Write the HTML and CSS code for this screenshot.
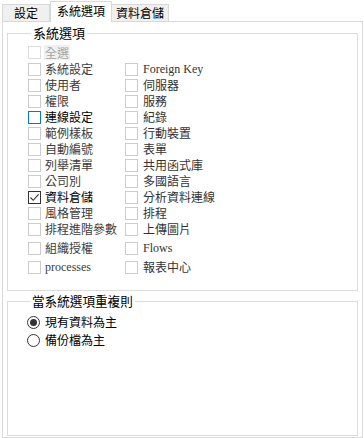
FILE: index.html
```html
<!DOCTYPE html>
<html lang="zh-Hant">
<head>
<meta charset="utf-8">
<title>系統選項</title>
<link rel="stylesheet" href="styles.css">
</head>
<body>
<div class="tabs">
  <div class="tab tab-1">設定</div>
  <div class="tab tab-active">系統選項</div>
  <div class="tab tab-3">資料倉儲</div>
</div>
<div class="panel">
  <fieldset class="group group-options">
    <legend class="legend">系統選項</legend>
    <div class="row row-all">
      <span class="cb cb-disabled"></span><span class="lbl lbl-disabled">全選</span>
    </div>
    <div class="grid">
      <div class="row first"><span class="cb"></span><span class="lbl">系統設定</span></div>
      <div class="row first"><span class="cb"></span><span class="lbl lbl-c2 latin">Foreign Key</span></div>
      <div class="row"><span class="cb"></span><span class="lbl">使用者</span></div>
      <div class="row"><span class="cb"></span><span class="lbl lbl-c2">伺服器</span></div>
      <div class="row"><span class="cb"></span><span class="lbl">權限</span></div>
      <div class="row"><span class="cb"></span><span class="lbl lbl-c2">服務</span></div>
      <div class="row"><span class="cb cb-focus"></span><span class="lbl lbl-strong">連線設定</span></div>
      <div class="row"><span class="cb"></span><span class="lbl lbl-c2">紀錄</span></div>
      <div class="row"><span class="cb"></span><span class="lbl">範例樣板</span></div>
      <div class="row"><span class="cb"></span><span class="lbl lbl-c2">行動裝置</span></div>
      <div class="row"><span class="cb"></span><span class="lbl">自動編號</span></div>
      <div class="row"><span class="cb"></span><span class="lbl lbl-c2">表單</span></div>
      <div class="row"><span class="cb"></span><span class="lbl">列舉清單</span></div>
      <div class="row"><span class="cb"></span><span class="lbl lbl-c2">共用函式庫</span></div>
      <div class="row"><span class="cb"></span><span class="lbl">公司別</span></div>
      <div class="row"><span class="cb"></span><span class="lbl lbl-c2">多國語言</span></div>
      <div class="row"><span class="cb cb-checked"><svg class="check" viewBox="0 0 11 11" width="11" height="11"><path d="M1.5 5.5 L4.2 8.3 L9.6 2.4" fill="none" stroke="#333" stroke-width="1.1"/></svg></span><span class="lbl lbl-strong">資料倉儲</span></div>
      <div class="row"><span class="cb"></span><span class="lbl lbl-c2">分析資料連線</span></div>
      <div class="row"><span class="cb"></span><span class="lbl">風格管理</span></div>
      <div class="row"><span class="cb"></span><span class="lbl lbl-c2">排程</span></div>
      <div class="row"><span class="cb"></span><span class="lbl">排程進階參數</span></div>
      <div class="row"><span class="cb"></span><span class="lbl lbl-c2">上傳圖片</span></div>
      <div class="row spaced"><span class="cb"></span><span class="lbl">組織授權</span></div>
      <div class="row spaced"><span class="cb"></span><span class="lbl lbl-c2 latin">Flows</span></div>
      <div class="row spaced"><span class="cb"></span><span class="lbl latin">processes</span></div>
      <div class="row spaced"><span class="cb"></span><span class="lbl lbl-c2">報表中心</span></div>
    </div>
  </fieldset>
  <fieldset class="group group-dup">
    <legend class="legend legend-dup">當系統選項重複則</legend>
    <div class="radio-row"><span class="radio radio-on"></span><span class="lbl lbl-strong">現有資料為主</span></div>
    <div class="radio-row"><span class="radio"></span><span class="lbl lbl-strong">備份檔為主</span></div>
  </fieldset>
</div>
</body>
</html>
```
FILE: styles.css
```css
* { box-sizing: border-box; }
html, body { margin: 0; padding: 0; background: #ffffff; }
body {
  width: 364px;
  height: 438px;
  overflow: hidden;
  font-family: "Noto Sans CJK TC", "Noto Sans", sans-serif;
  font-size: 12px;
  color: #000;
}

.tabs {
  display: flex;
  align-items: flex-end;
  height: 21px;
  padding-left: 2px;
}
.tab {
  height: 17px;
  border: 1px solid #d9d9d9;
  border-bottom: none;
  background: #f0f0f0;
  font-size: 12px;
  line-height: 15px;
  text-align: center;
}
.tab-1 { width: 48px; }
.tab-active {
  width: 62px;
  height: 21px;
  margin-bottom: -1px;
  background: #ffffff;
  line-height: 18px;
  position: relative;
  z-index: 1;
}
.tab-3 { width: 57px; border-left: none; }

.panel {
  margin-left: 2px;
  width: 361px;
  height: 417px;
  border: 1px solid #d9d9d9;
  background: #ffffff;
  display: flex;
  flex-direction: column;
}

.group {
  margin: 4px 4px 0 4px;
  width: 351px;
  border: 1px solid #dcdcdc;
  padding: 4px 0 0 20px;
  min-width: 0;
}
.group-options { padding-bottom: 15px; }
.group-dup {
  margin-top: 3px;
  margin-bottom: 1px;
  flex: 1;
  padding-left: 19px;
  padding-top: 5px;
}

.legend {
  margin-left: 3px;
  padding: 0 2px;
  font-size: 13px;
  line-height: 14px;
  color: #000;
}
.legend-dup { font-size: 12.6px; }

.grid {
  display: grid;
  grid-template-columns: 97px 1fr;
  margin-top: 1px;
}

.row {
  display: flex;
  align-items: center;
  height: 16px;
}
.row.spaced { margin-top: 3px; }

.cb {
  flex: none;
  width: 13px;
  height: 13px;
  border: 1px solid #cccccc;
  background: #ffffff;
  display: flex;
  align-items: center;
  justify-content: center;
}
.cb-disabled { border-color: #dddddd; }
.cb-focus { border-color: #0078d7; }
.cb-checked { border-color: #333333; }
.check { display: block; }

.lbl {
  margin-left: 4px;
  line-height: 14px;
  color: #3c3c3c;
  white-space: nowrap;
}
.lbl-c2 { margin-left: 5px; color: #333333; }
.lbl-strong { color: #000000; }
.lbl-disabled {
  color: #a6a6a6;
  background: #f0f0f0;
  padding: 0 1px;
  margin-left: 3px;
  line-height: 15px;
}
.latin { font-family: "Liberation Serif", "DejaVu Serif", serif; font-size: 12px; }

.radio-row {
  display: flex;
  align-items: center;
  height: 18px;
}
.radio {
  flex: none;
  width: 13px;
  height: 13px;
  border: 1px solid #333333;
  border-radius: 50%;
  background: #ffffff;
  display: flex;
  align-items: center;
  justify-content: center;
}
.radio-on::after {
  content: "";
  width: 7px;
  height: 7px;
  border-radius: 50%;
  background: #333333;
}
.radio-row .lbl { margin-left: 5px; }
```
